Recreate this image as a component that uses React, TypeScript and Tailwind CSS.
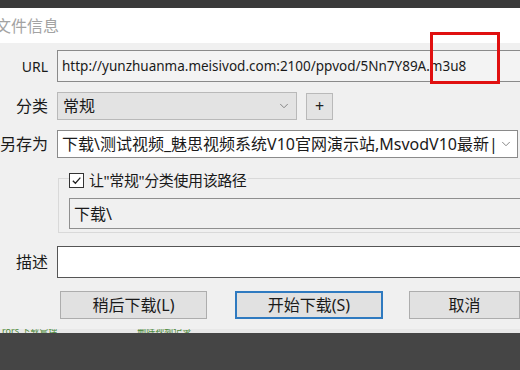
import { ChevronDown } from 'lucide-react';

const font = "font-['Segoe_UI','Noto_Sans','Noto_Sans_CJK_SC',sans-serif]";

function Label({ children }: { children: React.ReactNode }) {
  return (
    <div className="w-[48px] shrink-0 text-right text-[16px] text-[#1a1a1a] whitespace-nowrap">{children}</div>
  );
}

export default function App() {
  return (
    <div className={`relative w-[520px] h-[370px] overflow-hidden bg-[#454545] ${font}`}>
      <div className="h-[8px] bg-[#3a3a3a]" />
      <div className="h-[35px] bg-white flex items-center">
        <span className="-ml-[5px] text-[16px] text-[#a3a3a3]">文件信息</span>
      </div>

      <div className="h-[286px] bg-[#f0f0f0] pt-[7px] flex flex-col">
        {/* URL */}
        <div className="flex items-center gap-[9px] h-[32px]">
          <div className="w-[48px] shrink-0 text-right text-[14px] text-[#1a1a1a]">URL</div>
          <div className="flex-1 h-full -mr-[4px] bg-[#f3f3f3] border border-[#8a8a8a] flex items-center pl-[4px] text-[13.5px] text-[#1a1a1a] whitespace-nowrap">
            http://yunzhuanma.meisivod.com:2100/ppvod/5Nn7Y89A.m3u8
          </div>
        </div>

        {/* 分类 */}
        <div className="flex items-center gap-[9px] h-[28px] mt-[10px]">
          <Label>分类</Label>
          <div className="w-[240px] h-full bg-[#e3e3e3] border border-[#b9b9b9] flex items-center justify-between pl-[5px] pr-[5px] text-[16px] text-[#1a1a1a]">
            <span>常规</span>
            <ChevronDown className="w-[14px] h-[14px] text-[#777]" strokeWidth={1.5} />
          </div>
          <div className="w-[27px] h-[27px] bg-[#e3e3e3] border border-[#b9b9b9] flex items-center justify-center text-[16px] text-[#222]">
            +
          </div>
        </div>

        {/* 另存为 */}
        <div className="flex items-center gap-[9px] h-[28px] mt-[10px]">
          <Label>另存为</Label>
          <div className="flex-1 mr-[2px] h-full bg-white border border-[#8a8a8a] flex items-center justify-between pl-[4px] pr-[4px] text-[16px] text-[#1a1a1a] whitespace-nowrap overflow-hidden">
            <span>下载\测试视频_魅思视频系统V10官网演示站,MsvodV10最新|</span>
            <ChevronDown className="w-[14px] h-[14px] text-[#777] shrink-0" strokeWidth={1.5} />
          </div>
        </div>

        {/* group box */}
        <div className="relative ml-[58px] mt-[20px] h-[55px] border border-r-0 border-[#d9d9d9]">
          <div className="absolute -top-[10px] left-[10px] flex items-center gap-[5px] bg-[#f0f0f0] pr-[2px]">
            <div className="w-[15px] h-[15px] border border-[#333] bg-white flex items-center justify-center">
              <svg viewBox="0 0 12 12" className="w-[11px] h-[11px]">
                <path d="M2 6.2 L4.8 9 L10.2 2.8" fill="none" stroke="#222" strokeWidth="1.4" />
              </svg>
            </div>
            <span className="text-[15px] tracking-[-0.4px] text-[#1a1a1a]">让"常规"分类使用该路径</span>
          </div>
          <div className="mt-[19px] ml-[10px] h-[31px] bg-[#f0f0f0] border border-r-0 border-[#8f8f8f] flex items-center pl-[4px] text-[16px] text-[#1a1a1a]">
            下载\
          </div>
        </div>

        {/* 描述 */}
        <div className="flex items-center gap-[9px] h-[32px] mt-[13px]">
          <Label>描述</Label>
          <div className="flex-1 h-full -mr-[4px] bg-white border border-[#555]" />
        </div>

        {/* buttons */}
        <div className="flex items-center h-[28px] mt-[13px]">
          <div className="ml-[60px] w-[148px] h-full bg-[#e1e1e1] border border-[#adadad] flex items-center justify-center text-[16px] text-[#1a1a1a]">
            稍后下载(L)
          </div>
          <div className="ml-[28px] w-[149px] h-full bg-[#e1e1e1] border-2 border-[#2f7ac0] flex items-center justify-center text-[16px] text-[#1a1a1a]">
            开始下载(S)
          </div>
          <div className="ml-[26px] w-[112px] h-full bg-[#e1e1e1] border border-[#adadad] flex items-center justify-center text-[16px] text-[#1a1a1a]">
            取消
          </div>
        </div>
      </div>

      {/* strip of the window behind */}
      <div className="h-[4px] bg-[#e8e8e8] overflow-hidden flex text-[9px] leading-[4px] text-[#4e8a3a]">
        <span className="ml-[2px]">rors 下载管理</span>
        <span className="ml-[80px]">删除视频记录</span>
      </div>

      {/* red highlight */}
      <div className="absolute left-[430px] top-[32px] w-[70px] h-[52px] border-[3px] border-[#e01010]" />
    </div>
  );
}
